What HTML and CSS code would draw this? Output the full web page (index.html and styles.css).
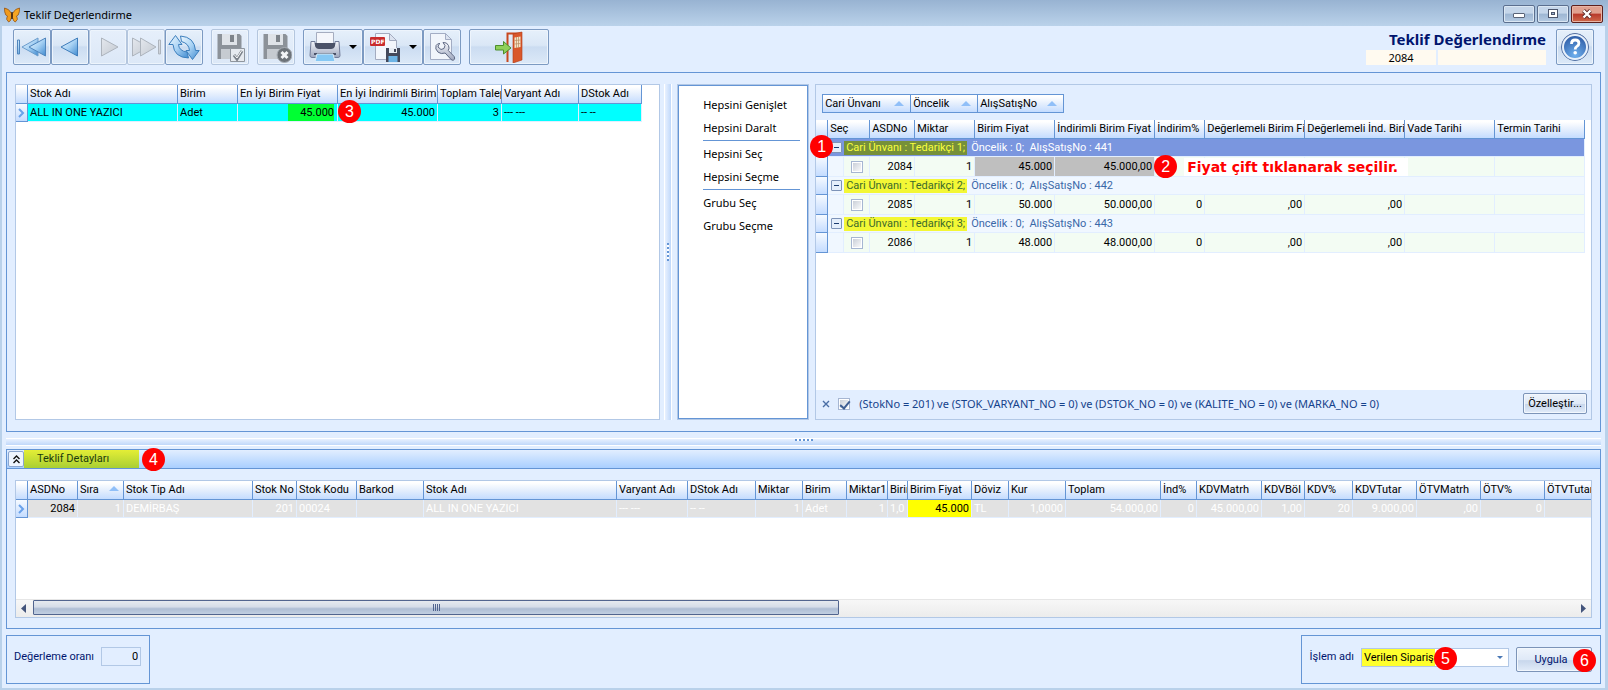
FILE: index.html
```html
<!DOCTYPE html>
<html lang="tr">
<head>
<meta charset="utf-8">
<title>Teklif Değerlendirme</title>
<link rel="stylesheet" href="styles.css">
</head>
<body>
<svg class="defs" width="0" height="0" aria-hidden="true">
  <defs>
    <linearGradient id="blue" x1="0" y1="0" x2="1" y2="1"><stop offset="0" stop-color="#eef8ff"/><stop offset=".5" stop-color="#a8d2f4"/><stop offset="1" stop-color="#3f8ad0"/></linearGradient>
    <linearGradient id="grey" x1="0" y1="0" x2="1" y2="1"><stop offset="0" stop-color="#e4e8ee"/><stop offset="1" stop-color="#c3c9d1"/></linearGradient>
    <linearGradient id="metal" x1="0" y1="0" x2="0" y2="1"><stop offset="0" stop-color="#f4f6fb"/><stop offset="1" stop-color="#9da6bd"/></linearGradient>
    <radialGradient id="ball" cx=".5" cy=".8" r=".8"><stop offset="0" stop-color="#6fb0ee"/><stop offset="1" stop-color="#27539f"/></radialGradient>
  </defs>
</svg>

<header class="titlebar">
  <svg class="app-icon" viewBox="0 0 16 16" width="16" height="16"><path d="M7.500 6.500Q5 1.500.5 1q-.3 4 1.300 7l1.700 1q-1 2-.8 3.500l2 2.500q2-.5 2.800-4.500Z" fill="#f09a1c" stroke="#8a480c" stroke-width=".7"/><path d="M8.500 6.500Q11 1.500 15.500 1q.3 4-1.300 7l-1.700 1q1 2 .8 3.500l-2 2.500q-2-.5-2.800-4.500Z" fill="#f6a623" stroke="#8a480c" stroke-width=".7"/><path d="M8 5v7" stroke="#3a2008" stroke-width="1.400"/></svg>
  <span class="window-title">Teklif Değerlendirme</span>
  <div class="window-buttons">
    <button type="button" aria-label="Simge durumuna küçült"><svg viewBox="0 0 12 12" width="12" height="12"><rect x=".5" y="5.500" width="11" height="4" rx=".5" fill="#fff" stroke="#5a6478"/></svg></button>
    <button type="button" aria-label="Ekranı kapla"><svg viewBox="0 0 12 12" width="12" height="12"><rect x="1.500" y="1.500" width="9" height="8" fill="#fff" stroke="#4c566c"/><rect x="4.500" y="4.500" width="3" height="2" fill="#9fb4d2" stroke="#4c566c"/></svg></button>
    <button type="button" class="close" aria-label="Kapat"><svg viewBox="0 0 12 12" width="12" height="12"><path d="m2.500 2.500 7 7m0-7-7 7" stroke="#5a2a2a" stroke-width="4"/><path d="m2.500 2.500 7 7m0-7-7 7" stroke="#fff" stroke-width="2.400"/></svg></button>
  </div>
</header>

<div class="frame">
  <div class="toolbar">
    <div class="tool-group">
      <button type="button" class="tool" aria-label="İlk kayıt"><svg viewBox="0 0 32 32" width="32" height="32"><path d="M1.500 9h2v14h-2z" fill="url(#blue)" stroke="#4f85bd"/><path d="M22 7v18L6 16Z" fill="url(#blue)" stroke="#6a9ccc"/><path d="M29.500 7v18L13 16Z" fill="url(#blue)" stroke="#4f85bd"/></svg></button>
      <button type="button" class="tool" aria-label="Önceki kayıt"><svg viewBox="0 0 32 32" width="32" height="32"><path d="M23.500 7v18L7 16Z" fill="url(#blue)" stroke="#3f7dbb"/></svg></button>
      <button type="button" class="tool" disabled aria-label="Sonraki kayıt"><svg viewBox="0 0 32 32" width="32" height="32"><path d="M9.500 7v18L26 16Z" fill="url(#grey)" stroke="#adb4bd"/></svg></button>
      <button type="button" class="tool" disabled aria-label="Son kayıt"><svg viewBox="0 0 32 32" width="32" height="32"><path d="M28.500 9h2v14h-2z" fill="url(#grey)" stroke="#adb4bd"/><path d="M2.500 7v18L19 16Z" fill="url(#grey)" stroke="#adb4bd"/><path d="M10.500 7v18L26 16Z" fill="url(#grey)" stroke="#adb4bd"/></svg></button>
      <button type="button" class="tool" aria-label="Yenile"><svg viewBox="0 0 32 32" width="32" height="32"><path d="M7.500 4.500 14 13.500H10.500Q11 20 19 21L20.500 27Q6 26.500 5 13.500H.8Z" fill="url(#blue)" stroke="#3d7fbd"/><path d="M24.500 28.500 18 19.500H21.500Q21 12.500 13.500 10.500L12.500 5Q26.500 6 27.500 19.500H31.200Z" fill="url(#blue)" stroke="#3d7fbd"/></svg></button>
    </div>
    <button type="button" class="tool" disabled aria-label="Kaydet"><svg viewBox="0 0 32 32" width="32" height="32"><path d="M3.500 3h22l2 2v23h-24Z" fill="#8c9299"/><path d="M8 3h15v11H8z" fill="#dfe3e8"/><path d="M16 4h4v7h-4z" fill="#7d838a"/><path d="M7 18h17v10H7z" fill="#c6cbd1"/><path d="M16.500 17.500h14v13h-14z" fill="#e6eaef" stroke="#8f969e"/><path d="m20 24 3 4 5-8" fill="none" stroke="#7c838b" stroke-width="3"/><path d="m20.500 24 2.500 3 4.500-7" fill="none" stroke="#fff" stroke-width="1"/></svg></button>
    <button type="button" class="tool" disabled aria-label="Kaydı iptal et"><svg viewBox="0 0 32 32" width="32" height="32"><path d="M3.500 3h22l2 2v23h-24Z" fill="#8c9299"/><path d="M8 3h15v11H8z" fill="#dfe3e8"/><path d="M16 4h4v7h-4z" fill="#7d838a"/><path d="M7 18h17v10H7z" fill="#c6cbd1"/><circle cx="24.500" cy="24" r="7.500" fill="#6d7379" stroke="#a8aeb5"/><path d="m21.500 21 6 6m0-6-6 6" stroke="#f2f4f6" stroke-width="3"/></svg></button>
    <div class="tool-group">
      <button type="button" class="tool with-menu" aria-label="Yazdır"><svg viewBox="0 0 32 32" width="32" height="32"><path d="M7.500 1.500h17v12h-17z" fill="#f4f6fb" stroke="#a5adc0"/><path d="M2 10.500h4v3h20v-3h4l1 14q0 2-2 2H3q-2 0-2-2Z" fill="url(#metal)" stroke="#727c99"/><path d="M6 12h20v3q-1 3-4 3H10q-3 0-4-3Z" fill="#4b5268"/><path d="M5 22h22v2H5z" fill="#4b5268"/><path d="M8 23h16l2 7.500H6Z" fill="#86c8f4" stroke="#dcecf8"/></svg><span class="caret"></span></button>
      <button type="button" class="tool with-menu" aria-label="PDF olarak kaydet"><svg viewBox="0 0 32 32" width="32" height="32"><path d="M6.500 2.500h14l7 7v19h-21Z" fill="#f3f6fc" stroke="#a3abc0"/><path d="M20.500 2.500v7h7Z" fill="#dce3f0" stroke="#a3abc0"/><rect x="1" y="6" width="15" height="9" rx="1" fill="#c92c2c"/><text x="2" y="13" class="pdf-label">PDF</text><path d="M17 17h14v14H17z" fill="#44495c"/><path d="M20 17h8v5h-8z" fill="#e8edf5"/><path d="M25 18h2v3h-2z" fill="#44495c"/><path d="M19.500 25h9v6h-9z" fill="#6db4e6"/></svg><span class="caret"></span></button>
      <button type="button" class="tool" aria-label="Ayarlar"><svg viewBox="0 0 32 32" width="32" height="32"><path d="M4.500 2.500h15l6 6v20h-21Z" fill="#f1f5fb" stroke="#a3adc4"/><path d="M19.500 2.500v6h6Z" fill="#dce3f0" stroke="#a3adc4"/><path d="M14 12.500q-2 1-2 3.500l3 2.500 3-1 1-3-2-3q4-.5 5.500 3 1.200 2.800-.2 5l6 6.200q1.200 3-1 3.500-1.200.3-2.200-.7l-6-6.500q-4 1.500-7-.8-3.500-3.200-2-6.700 1.200-2.200 3.900-2Z" fill="url(#metal)" stroke="#5f6984"/></svg></button>
    </div>
    <button type="button" class="tool exit" aria-label="Çıkış"><svg viewBox="0 0 32 32" width="32" height="32"><path d="M14.500 31V2.500H28" fill="none" stroke="#c8481f" stroke-width="2"/><path d="m20 3 9-2v28l-9 3Z" fill="#d9572b" stroke="#b13b16" stroke-width=".6"/><path d="m21.500 6.500 6-1V16l-6 1Z" fill="#f5e4c8"/><path d="M23.500 6v11m2-11v11m-4-7.500 6-.5m-6 4 6-.5" stroke="#b98a5c" stroke-width=".7"/><path d="M2.500 14.500h8v-4l7.500 6.500-7.500 6v-4h-8Z" fill="#8fd05a" stroke="#4c8f2c"/></svg></button>
    <div class="heading">
      <h1>Teklif Değerlendirme</h1>
      <div class="heading-fields">
        <input type="text" class="doc-no" value="2084" aria-label="Teklif no" readonly>
        <input type="text" class="doc-name" aria-label="Teklif adı" readonly>
      </div>
    </div>
    <button type="button" class="tool" aria-label="Yardım"><svg viewBox="0 0 32 32" width="32" height="32"><circle cx="16" cy="16" r="13.500" fill="url(#ball)" stroke="#5570a0"/><circle cx="16" cy="16" r="12" fill="none" stroke="#e9f1fb" stroke-width="2"/><path d="M12.500 13q0-4 3.700-4t3.700 3.200q0 2-2 3.200-1.700 1-1.700 3" fill="none" stroke="#fff" stroke-width="2.800"/><circle cx="16.200" cy="21.800" r="1.800" fill="#fff"/></svg></button>
  </div>

  <section class="panel offers">
    <div class="grid stock-grid">
      <table>
        <colgroup><col class="c12"><col class="c150"><col class="c60"><col class="c100"><col class="c100"><col class="c64"><col class="c77"><col class="c63"></colgroup>
        <thead><tr><th></th><th>Stok Adı</th><th>Birim</th><th>En İyi Birim Fiyat</th><th>En İyi İndirimli Birim Fiyat</th><th>Toplam Talep</th><th>Varyant Adı</th><th>DStok Adı</th></tr></thead>
        <tbody><tr class="current"><td class="mark"><svg viewBox="0 0 8 10" width="8" height="10"><path d="m2 1 4 4-4 4" fill="none" stroke="#6aa2ea" stroke-width="2"/></svg></td><td>ALL IN ONE YAZICI</td><td>Adet</td><td class="num best">45.000<b class="badge badge-3">3</b></td><td class="num">45.000</td><td class="num">3</td><td>--- ---</td><td>-- --</td></tr></tbody>
      </table>
    </div>
    <div class="splitter vertical"><i></i></div>
    <nav class="actions">
      <button type="button">Hepsini Genişlet</button>
      <button type="button">Hepsini Daralt</button>
      <hr>
      <button type="button">Hepsini Seç</button>
      <button type="button">Hepsini Seçme</button>
      <hr>
      <button type="button">Grubu Seç</button>
      <button type="button">Grubu Seçme</button>
    </nav>
    <div class="grid supplier-grid">
      <div class="group-by">
        <button type="button" class="g-cari">Cari Ünvanı<i class="sort"></i></button><button type="button" class="g-oncelik">Öncelik<i class="sort"></i></button><button type="button" class="g-satis">AlışSatışNo<i class="sort"></i></button>
      </div>
      <div class="grid-body">
        <table>
          <colgroup><col class="c12"><col class="c16"><col class="c26"><col class="c45"><col class="c60"><col class="c80"><col class="c100"><col class="c50"><col class="c100"><col class="c100"><col class="c90"><col class="c90"></colgroup>
          <thead><tr><th></th><th colspan="2">Seç</th><th>ASDNo</th><th>Miktar</th><th>Birim Fiyat</th><th>İndirimli Birim Fiyat</th><th>İndirim%</th><th>Değerlemeli Birim Fiyat</th><th>Değerlemeli İnd. Birim Fiyat</th><th>Vade Tarihi</th><th>Termin Tarihi</th></tr></thead>
          <tbody>
            <tr class="group selected"><td class="mark anchor"><b class="badge badge-1">1</b></td><td colspan="11"><div class="group-line"><button type="button" class="toggle" aria-label="Grubu daralt"></button><span class="supplier">Cari Ünvanı : Tedarikçi 1;</span><span>Öncelik : 0;&nbsp; AlışSatışNo : 441</span></div></td></tr>
            <tr class="item"><td class="mark"></td><td class="indent"></td><td class="pick"><input type="checkbox" aria-label="2084 seç"></td><td class="num">2084</td><td class="num">1</td><td class="num chosen">45.000</td><td class="num chosen anchor">45.000,00<b class="badge badge-2">2</b><strong class="note">Fiyat çift tıklanarak seçilir.</strong></td><td></td><td></td><td></td><td></td><td></td></tr>
            <tr class="group"><td class="mark"></td><td colspan="11"><div class="group-line"><button type="button" class="toggle" aria-label="Grubu daralt"></button><span class="supplier">Cari Ünvanı : Tedarikçi 2;</span><span>Öncelik : 0;&nbsp; AlışSatışNo : 442</span></div></td></tr>
            <tr class="item"><td class="mark"></td><td class="indent"></td><td class="pick"><input type="checkbox" aria-label="2085 seç"></td><td class="num">2085</td><td class="num">1</td><td class="num">50.000</td><td class="num">50.000,00</td><td class="num">0</td><td class="num">,00</td><td class="num">,00</td><td></td><td></td></tr>
            <tr class="group"><td class="mark"></td><td colspan="11"><div class="group-line"><button type="button" class="toggle" aria-label="Grubu daralt"></button><span class="supplier">Cari Ünvanı : Tedarikçi 3;</span><span>Öncelik : 0;&nbsp; AlışSatışNo : 443</span></div></td></tr>
            <tr class="item"><td class="mark"></td><td class="indent"></td><td class="pick"><input type="checkbox" aria-label="2086 seç"></td><td class="num">2086</td><td class="num">1</td><td class="num">48.000</td><td class="num">48.000,00</td><td class="num">0</td><td class="num">,00</td><td class="num">,00</td><td></td><td></td></tr>
          </tbody>
        </table>
      </div>
      <div class="filter-bar">
        <button type="button" class="clear" aria-label="Filtreyi kaldır"><svg viewBox="0 0 8 8" width="8" height="8"><path d="m1 1 6 6m0-6-6 6" stroke="#4a6ea5" stroke-width="1.400"/></svg></button>
        <label><input type="checkbox" checked><span>(StokNo = 201) ve (STOK_VARYANT_NO = 0) ve (DSTOK_NO = 0) ve (KALITE_NO = 0) ve (MARKA_NO = 0)</span></label>
        <button type="button" class="push customize">Özelleştir...</button>
      </div>
    </div>
  </section>

  <div class="splitter horizontal"><i></i></div>

  <section class="panel details">
    <div class="panel-head">
      <button type="button" class="collapse" aria-label="Daralt"><svg viewBox="0 0 9 9" width="9" height="9"><path d="m1.500 4 3-3 3 3m-6 4 3-3 3 3" fill="none" stroke="#111" stroke-width="1.400"/></svg></button>
      <h2>Teklif Detayları</h2>
      <b class="badge badge-4">4</b>
    </div>
    <div class="grid detail-grid">
      <div class="grid-body">
        <table>
          <colgroup><col class="c12"><col class="c50"><col class="c46"><col class="c129"><col class="c44"><col class="c60"><col class="c67"><col class="c193"><col class="c71"><col class="c68"><col class="c47"><col class="c44"><col class="c41"><col class="c20"><col class="c64"><col class="c37"><col class="c57"><col class="c95"><col class="c36"><col class="c65"><col class="c43"><col class="c48"><col class="c64"><col class="c64"><col class="c64"><col class="c64"></colgroup>
          <thead><tr><th></th><th>ASDNo</th><th>Sıra<i class="sort"></i></th><th>Stok Tip Adı</th><th>Stok No</th><th>Stok Kodu</th><th>Barkod</th><th>Stok Adı</th><th>Varyant Adı</th><th>DStok Adı</th><th>Miktar</th><th>Birim</th><th>Miktar1</th><th>Birim</th><th>Birim Fiyat</th><th>Döviz</th><th>Kur</th><th>Toplam</th><th>İnd%</th><th>KDVMatrh</th><th>KDVBöl</th><th>KDV%</th><th>KDVTutar</th><th>ÖTVMatrh</th><th>ÖTV%</th><th>ÖTVTutar</th></tr></thead>
          <tbody><tr class="dimmed"><td class="mark"><svg viewBox="0 0 8 10" width="8" height="10"><path d="m2 1 4 4-4 4" fill="none" stroke="#6aa2ea" stroke-width="2"/></svg></td><td class="num strong">2084</td><td class="num">1</td><td>DEMİRBAŞ</td><td class="num">201</td><td>00024</td><td></td><td>ALL IN ONE YAZICI</td><td>--- ---</td><td>-- --</td><td class="num">1</td><td>Adet</td><td class="num">1</td><td>1,0</td><td class="num price">45.000</td><td>TL</td><td class="num">1,0000</td><td class="num">54.000,00</td><td class="num">0</td><td class="num">45.000,00</td><td class="num">1,00</td><td class="num">20</td><td class="num">9.000,00</td><td class="num">,00</td><td class="num">0</td><td class="num">,00</td></tr></tbody>
        </table>
      </div>
      <div class="scrollbar">
        <svg viewBox="0 0 18 18" width="18" height="18"><path d="M10 4v9L5 8.500Z" fill="#44557c"/></svg>
        <div class="track"><div class="thumb"><i></i></div></div>
        <svg viewBox="0 0 18 18" width="18" height="18"><path d="M8 4v9l5-4.500Z" fill="#44557c"/></svg>
      </div>
    </div>
  </section>

  <footer class="footer">
    <div class="box">
      <label for="rate">Değerleme oranı</label>
      <input type="text" id="rate" value="0">
    </div>
    <div class="box action-box">
      <label for="op">İşlem adı</label>
      <div class="combo">
        <select id="op"><option>Verilen Sipariş</option></select>
        <i class="combo-arrow"></i>
        <b class="badge badge-5">5</b>
      </div>
      <div class="apply"><button type="button" class="push">Uygula</button><b class="badge badge-6">6</b></div>
    </div>
  </footer>
</div>
</body>
</html>
```

FILE: styles.css
```css
* { box-sizing: border-box; }

body {
  margin: 0;
  min-height: 100vh;
  display: flex;
  flex-direction: column;
  background: #b9d1ea;
  color: #000;
  font: 11px/14px Roboto, "Noto Sans", sans-serif;
  overflow: hidden;
}

button, input, select { font: inherit; color: inherit; margin: 0; padding: 0; }
.defs { position: absolute; }

/* Title bar */
.titlebar {
  height: 26px;
  display: flex;
  align-items: center;
  gap: 4px;
  padding: 3px 5px 0 4px;
  background: linear-gradient(#98b3d2, #bad2ea);
}
.window-title { font-family: "Noto Sans", sans-serif; }
.window-buttons { margin-left: auto; align-self: flex-start; display: flex; gap: 2px; padding-top: 2px; }
.window-buttons button {
  width: 32px;
  height: 18px;
  display: grid;
  place-items: center;
  border: 1px solid #5b6f8f;
  border-radius: 2px;
  background: linear-gradient(#c5d6ea 45%, #9db6d3 50%, #b5cbe3);
  box-shadow: inset 0 0 0 1px #dbe7f3;
}
.window-buttons .close {
  border-color: #5d1f1c;
  background: linear-gradient(#e0a08f 45%, #b8382a 50%, #cf6a4c);
  box-shadow: inset 0 0 0 1px #e9b5a6;
}

.frame {
  flex: 1;
  display: flex;
  flex-direction: column;
  margin: 0 3px 2px 2px;
  padding: 0 4px 4px;
  background: #e2eeff;
}

/* Toolbar */
.toolbar { display: flex; gap: 8px; height: 46px; padding: 3px 7px 0; align-items: flex-start; }
.tool-group { display: flex; }
.tool {
  width: 38px;
  height: 36px;
  display: flex;
  align-items: center;
  justify-content: center;
  border: 1px solid #7c9ac2;
  border-radius: 2px;
  background: linear-gradient(#e6f0fb, #dae7f6 45%, #cbdcf1 50%, #dce9f8);
  box-shadow: inset 0 0 0 1px #edf4fc;
}
.tool:disabled { border-color: #b4c6de; background: linear-gradient(#e6effb, #dce8f7); }
.with-menu { width: 60px; gap: 8px; }
.exit { width: 80px; }
.caret { border: 4px solid transparent; border-top-color: #000; border-bottom: 0; }
.pdf-label { font: bold 6px "DejaVu Sans", sans-serif; fill: #fff; }
.heading { margin-left: auto; display: flex; flex-direction: column; align-items: flex-end; gap: 1px; width: 180px; }
.heading h1 { margin: 0; font: bold 15px/20px "Noto Sans", sans-serif; color: #00156e; white-space: nowrap; }
.heading-fields { display: flex; gap: 2px; width: 100%; }
.heading-fields input { height: 15px; border: 0; background: #fffaf0; min-width: 0; font-family: "Noto Sans", sans-serif; }
.doc-no { width: 70px; text-align: center; }
.doc-name { flex: 1; }
.heading + .tool { margin-left: 2px; }

/* Panels */
.panel { border: 1px solid #6495d5; }
.offers { flex: 1 0 360px; display: flex; padding: 11px 8px; }
.details { display: flex; flex-direction: column; }
.grid { border: 1px solid #b2c8e6; background: #fff; min-width: 0; overflow: hidden; }
.stock-grid { flex: 645 1 0; }
.supplier-grid { flex: 777 1 0; margin-left: 6px; display: flex; flex-direction: column; overflow: visible; background: #e2eeff; }
.supplier-grid .grid-body { flex: 1; background: #fff; }

.splitter { position: relative; }
.splitter.vertical { width: 17px; display: flex; justify-content: center; padding-right: 1px; }
.splitter.vertical::before { content: ""; width: 6px; border: solid #fff; border-width: 0 1px; background: linear-gradient(90deg, #e8f1ff, #c0d8fa); }
.splitter.vertical i { position: absolute; top: 50%; width: 2px; height: 18px; margin-top: -9px; left: 7px; background: repeating-linear-gradient(#6495d5 0 2px, #fff 2px 4px); }
.splitter.horizontal { height: 17px; padding-top: 6px; }
.splitter.horizontal::before { content: ""; display: block; height: 6px; border: solid #fff; border-width: 1px 0; background: linear-gradient(#e8f1ff, #c0d8fa); }
.splitter.horizontal i { position: absolute; left: 50%; top: 7px; width: 18px; height: 2px; margin-left: -9px; background: repeating-linear-gradient(90deg, #6495d5 0 2px, #fff 2px 4px); }

/* Action list */
.actions {
  flex: none;
  width: 132px;
  padding: 8px 8px 8px 25px;
  border: 1px solid #b2c8e6;
  outline: 1px solid #6495d5;
  outline-offset: -2px;
  background: #fff;
}
.actions button { display: block; height: 23px; border: 0; background: none; font-family: "Noto Sans", sans-serif; white-space: nowrap; }
.actions hr { margin: 1px 0; border: 0; border-top: 1px solid #6495d5; }

/* Tables */
table { table-layout: fixed; width: 0; border-collapse: separate; border-spacing: 0; }
th, td { padding: 0 2px; overflow: hidden; white-space: nowrap; text-align: left; font-weight: normal; border: solid #e2eeff; border-width: 0 1px 1px 0; }
th { height: 19px; border-color: #6495d5; background: linear-gradient(#fff 10%, #e2edfd 55%, #c4dcff); color: #000; }
td { height: 18px; }
.num { text-align: right; }
.mark { padding: 0 1px; border-color: #6495d5; background: linear-gradient(#f6faff, #c4dcff); }
td svg { display: block; }
.current td:not(.mark) { background-color: #0ff; }
.current .best {
  position: relative;
  overflow: visible;
  padding-right: 3px;
  background: linear-gradient(#0f3, #0f3) 50px 0 / 46px 100% no-repeat;
}
.dimmed td:not(.mark) { background: #e2e2e2; color: #fff; }
.dimmed td.strong { color: #000; }
.dimmed td.price { background: #ff0; color: #000; }
.anchor { position: relative; overflow: visible; }

.sort { display: inline-block; border: 5px solid transparent; border-bottom-color: #90bff8; border-top: 0; }
th .sort { margin-left: 10px; vertical-align: 2px; }

/* Supplier grid */
.group-by { display: flex; padding: 9px 6px 7px; }
.group-by button {
  display: flex;
  align-items: center;
  justify-content: space-between;
  height: 19px;
  padding: 0 6px 0 2px;
  border: 1px solid #6495d5;
  border-left-width: 0;
  background: linear-gradient(#fff 10%, #e2edfd 55%, #c4dcff);
}
.group-by .g-cari { width: 89px; border-left-width: 1px; }
.g-oncelik { width: 67px; }
.g-satis { width: 86px; }
.group td:not(.mark) { background: #f0f7ff; color: #3a68a8; padding-left: 3px; }
.group-line { display: flex; align-items: center; gap: 2px; }
.supplier { margin-right: 2px; padding: 0 2px; background: #f3f735; color: #3c6a2c; line-height: 14px; }
.group.selected td:not(.mark) { background: #7a96df; color: #fff; }
.selected .supplier { background: #769039; color: #f8ff3c; }
.toggle { flex: none; width: 11px; height: 11px; border: 1px solid #7d93b8; border-radius: 1px; background: linear-gradient(#1c3c70, #1c3c70) 2px 4px / 5px 1px no-repeat, #e4eefb; }
.item td { height: 20px; }
.item td:not(.mark) { background: #f3fcf3; }
.item td.indent { background: #f0f7ff; }
.item td.chosen { background: #bfbfbf; }
.pick { text-align: center; }
input[type="checkbox"] {
  appearance: none;
  flex: none;
  display: inline-block;
  vertical-align: middle;
  width: 12px;
  height: 12px;
  border: 1px solid #a6b6d2;
  background: linear-gradient(135deg, #c4cad4, #fff);
  box-shadow: inset 0 0 0 1px #fff;
}
input[type="checkbox"]:checked::before { content: ""; display: block; width: 4px; height: 8px; margin: 0 0 0 3px; border: solid #3f5f93; border-width: 0 2px 2px 0; transform: rotate(40deg); }
.note {
  position: absolute;
  z-index: 1;
  left: 129px;
  top: 1px;
  width: 224px;
  padding: 0 3px;
  background: #fff;
  color: #f00;
  font: bold 14px/18px "DejaVu Sans", sans-serif;
  text-align: left;
}

.filter-bar { display: flex; align-items: center; gap: 8px; height: 29px; padding: 0 4px 2px 6px; color: #15428b; }
.filter-bar label { display: flex; align-items: center; gap: 9px; white-space: nowrap; font-family: "Noto Sans", sans-serif; }
.clear { display: flex; border: 0; background: none; }
.push {
  border: 1px solid #7c94b8;
  border-radius: 2px;
  background: linear-gradient(#eef4fc, #dfe9f7 50%, #c8d7ec 55%, #e2ecf9);
  color: #000;
  box-shadow: inset 0 0 0 1px #f2f7fd;
}
.customize { margin-left: auto; width: 64px; height: 21px; white-space: nowrap; }

/* Details panel */
.panel-head { position: relative; display: flex; height: 19px; padding: 0 1px; border-bottom: 1px solid #6495d5; background: linear-gradient(#e2eeff, #a9cfff); }
.collapse { width: 16px; height: 16px; margin-top: 1px; display: grid; place-items: center; border: 1px solid #8ba6cf; border-radius: 2px; background: #eef5ff; }
.panel-head h2 { margin: 0; width: 115px; padding-left: 13px; font: 11px/18px Roboto, sans-serif; color: #1b3a0d; background: linear-gradient(#e4ee36, #a9cf33); }
.detail-grid { margin: 11px 8px 10px; }
.detail-grid .grid-body { height: 118px; overflow: hidden; }
.scrollbar { display: flex; height: 18px; background: linear-gradient(#f7f7f7, #ececec); border-top: 1px solid #e6e6e6; }
.scrollbar svg { flex: none; }
.track { flex: 1; }
.thumb { width: 52.4%; height: 15px; margin-left: -1px; border: 1px solid #52658f; border-radius: 1px; background: linear-gradient(#e6eaef, #d5dce8 45%, #aebdd4 60%, #c2cfe2); display: grid; place-items: center; }
.thumb i { width: 7px; height: 7px; background: repeating-linear-gradient(90deg, #52658f 0 1px, transparent 1px 2px); }

/* Footer */
.footer { display: flex; justify-content: space-between; margin-top: 6px; color: #00156e; }
.box { display: flex; align-items: flex-start; gap: 7px; height: 49px; border: 1px solid #6495d5; padding: 11px 8px 0 7px; }
.box label { line-height: 19px; white-space: nowrap; }
.box #rate { width: 40px; height: 19px; padding-right: 2px; border: 1px solid #b2c8e6; background: #e2eeff; text-align: right; color: #000; }
.action-box { padding-left: 8px; }
.combo { position: relative; }
.combo select { display: block; width: 148px; height: 19px; margin-top: 1px; padding-left: 2px; appearance: none; border: 1px solid #b2c8e6; border-radius: 0; background: linear-gradient(#ffff2e, #ffff2e) 0 0 / 73px 100% no-repeat #fff; color: #000; }
.combo-arrow { position: absolute; right: 6px; top: 9px; border: 3px solid transparent; border-top-color: #4a78b5; border-bottom: 0; pointer-events: none; }
.apply { position: relative; }
.apply .push { width: 76px; height: 25px; color: #00156e; padding-right: 6px; }

/* Numbered callouts */
.badge {
  position: absolute;
  z-index: 2;
  width: 23px;
  height: 23px;
  border-radius: 50%;
  background: #f00;
  color: #fff;
  font: 16px/23px "Liberation Sans", sans-serif;
  text-align: center;
}
.badge-1 { left: -6px; top: -4px; }
.badge-2 { left: 99px; top: -2px; }
.badge-3 { left: 100px; top: -4px; }
.badge-4 { left: 135px; top: -2px; }
.badge-5 { left: 73px; top: 0; }
.badge-6 { right: -4px; top: 2px; }

/* Column widths */
.c12 { width: 12px; } .c16 { width: 16px; } .c20 { width: 20px; } .c26 { width: 26px; }
.c36 { width: 36px; } .c37 { width: 37px; } .c41 { width: 41px; } .c43 { width: 43px; }
.c44 { width: 44px; } .c45 { width: 45px; } .c46 { width: 46px; } .c47 { width: 47px; }
.c48 { width: 48px; } .c50 { width: 50px; } .c57 { width: 57px; } .c60 { width: 60px; }
.c63 { width: 63px; } .c64 { width: 64px; } .c65 { width: 65px; } .c67 { width: 67px; }
.c68 { width: 68px; } .c71 { width: 71px; } .c77 { width: 77px; } .c80 { width: 80px; }
.c90 { width: 90px; } .c95 { width: 95px; } .c100 { width: 100px; } .c129 { width: 129px; }
.c150 { width: 150px; } .c193 { width: 193px; }
```
